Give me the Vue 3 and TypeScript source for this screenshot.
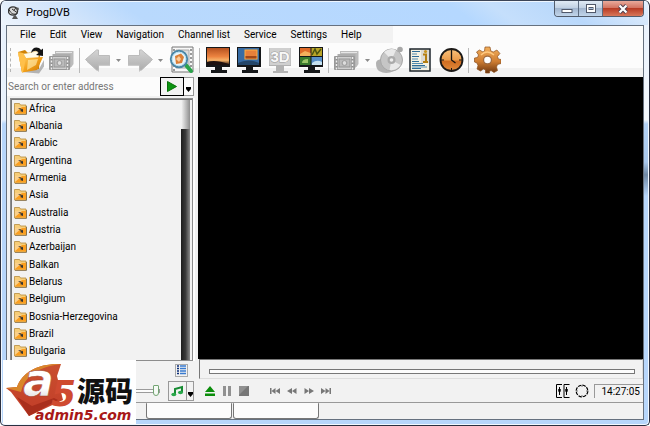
<script setup lang="ts">
import { ref } from 'vue'

interface Tool {
  kind: 'button' | 'sep' | 'caret'
  icon?: string
  label?: string
}

const menus: string[] = ['File', 'Edit', 'View', 'Navigation', 'Channel list', 'Service', 'Settings', 'Help']

const tools: Tool[] = [
  { kind: 'button', icon: 'open', label: 'Open' },
  { kind: 'button', icon: 'film', label: 'Recordings' },
  { kind: 'sep' },
  { kind: 'button', icon: 'back', label: 'Back' },
  { kind: 'caret', label: 'Back history' },
  { kind: 'button', icon: 'forward', label: 'Forward' },
  { kind: 'caret', label: 'Forward history' },
  { kind: 'button', icon: 'search', label: 'Search' },
  { kind: 'sep' },
  { kind: 'button', icon: 'screen', label: 'Full screen' },
  { kind: 'button', icon: 'pip', label: 'Picture in picture' },
  { kind: 'button', icon: 'stereo', label: 'Stereo mode' },
  { kind: 'button', icon: 'mosaic', label: 'Mosaic' },
  { kind: 'sep' },
  { kind: 'button', icon: 'film', label: 'Record' },
  { kind: 'caret', label: 'Record options' },
  { kind: 'button', icon: 'disc', label: 'Disc' },
  { kind: 'button', icon: 'guide', label: 'Programme guide' },
  { kind: 'button', icon: 'clock', label: 'Scheduler' },
  { kind: 'sep' },
  { kind: 'button', icon: 'gear', label: 'Options' },
]

const channels: string[] = [
  'Africa', 'Albania', 'Arabic', 'Argentina', 'Armenia', 'Asia', 'Australia', 'Austria',
  'Azerbaijan', 'Balkan', 'Belarus', 'Belgium', 'Bosnia-Herzegovina', 'Brazil', 'Bulgaria',
]

const address = ref('')
const position = ref(0)
const volume = ref(100)
</script>

<template>
  <div class="window">
    <svg class="defs" width="0" height="0" aria-hidden="true">
      <defs>
        <linearGradient id="gold" x1="0" y1="0" x2="1" y2="1">
          <stop offset="0" stop-color="#ffe08a" /><stop offset=".55" stop-color="#f5a31c" /><stop offset="1" stop-color="#c87400" />
        </linearGradient>
        <linearGradient id="sunset" x1="0" y1="0" x2="0" y2="1">
          <stop offset="0" stop-color="#b5511f" /><stop offset=".5" stop-color="#ec8340" /><stop offset=".72" stop-color="#f6b36a" /><stop offset="1" stop-color="#2a1208" />
        </linearGradient>
        <linearGradient id="silver" x1="0" y1="0" x2="0" y2="1">
          <stop offset="0" stop-color="#d4d4d4" /><stop offset="1" stop-color="#adadad" />
        </linearGradient>
        <linearGradient id="bronze" x1="0" y1="0" x2="0" y2="1">
          <stop offset="0" stop-color="#f3b05c" /><stop offset=".55" stop-color="#cf7e33" /><stop offset="1" stop-color="#6e3710" />
        </linearGradient>
        <linearGradient id="dial" x1="0" y1="0" x2="0" y2="1">
          <stop offset="0" stop-color="#f9c27c" /><stop offset=".5" stop-color="#ec9d4c" /><stop offset=".55" stop-color="#cf6d22" /><stop offset="1" stop-color="#e28b3c" />
        </linearGradient>
        <linearGradient id="flame" x1="0" y1="0" x2="0" y2="1">
          <stop offset="0" stop-color="#c9502f" /><stop offset="1" stop-color="#c23c28" />
        </linearGradient>
        <linearGradient id="pearl" x1="0" y1="0" x2="0" y2="1">
          <stop offset=".65" stop-color="#fff" /><stop offset="1" stop-color="#c4c4c4" />
        </linearGradient>
      </defs>
    </svg>

    <header class="titlebar">
      <svg class="app-icon" viewBox="0 0 12 14">
        <ellipse cx="5" cy="5" rx="4.6" ry="4.2" fill="#d8d8d8" stroke="#333" stroke-width="1.3" />
        <path d="M1 3.5C3 8 6 9 9.500 7.500M4 3l5 3.500M8 1.500l-2 3" fill="none" stroke="#333" />
        <path d="M6 9.500L4 13h6L7.500 9z" fill="#555" /><circle cx="9.500" cy="3" r="1.400" fill="#555" />
      </svg>
      <h1>ProgDVB</h1>
      <div class="caption">
        <button aria-label="Minimize"><svg viewBox="0 0 12 12"><rect x="1" y="6.500" width="10" height="3" fill="#fff" stroke="#50586a" /></svg></button>
        <button aria-label="Maximize"><svg viewBox="0 0 12 12"><rect x="1.500" y="1.500" width="9" height="8" fill="#fff" stroke="#50586a" /><rect x="4" y="4.500" width="4" height="2" fill="#a9c0dc" stroke="#50586a" /></svg></button>
        <button class="close" aria-label="Close"><svg viewBox="0 0 12 12"><path d="M2.500 2.500l7 7M9.500 2.500l-7 7" stroke="#4d4050" stroke-width="4" /><path d="M2.500 2.500l7 7M9.500 2.500l-7 7" stroke="#fff" stroke-width="2.200" /></svg></button>
      </div>
    </header>

    <div class="client">
      <nav class="menubar">
        <div class="menus">
          <button v-for="m in menus" :key="m">{{ m }}</button>
        </div>
      </nav>

      <div class="toolbar" role="toolbar" aria-label="Main toolbar">
        <span class="grip"></span>
        <template v-for="(t, i) in tools" :key="i">
          <span v-if="t.kind === 'sep'" class="sep"></span>
          <button v-else-if="t.kind === 'caret'" class="caret" :aria-label="t.label">
            <svg viewBox="0 0 5 3"><path d="M0 0h5L2.500 3z" fill="#8a8a8a" /></svg>
          </button>
          <button v-else class="tool" :aria-label="t.label">
            <svg v-if="t.icon === 'open'" viewBox="0 0 28 28">
              <path d="M5 26l17 1.500 5-7V14l-5 9z" fill="#888" opacity=".6" />
              <path d="M1 6l7-2 3 3 12 2-1 14L5 26z" fill="#cf8205" />
              <path d="M6 8l14-3 2 4-2 14-13 1z" fill="#fffbea" stroke="#dcae55" stroke-width=".6" />
              <path d="M1 6.500l5 .5 3 5 17-1-6 13L5 26.500z" fill="url(#gold)" />
              <path d="M1 6.500l5 .5 3 5L6 26l-1 .5z" fill="#ffc04a" /><path d="M11 14l10-1-2 6-9 5z" fill="#fff3bd" opacity=".6" />
              <path d="M14 7c1-6 7-7 10-3l2-1.500V10l-7-1 2.500-2C20 4 17 4 14 7z" fill="#141414" />
            </svg>
            <svg v-else-if="t.icon === 'film'" viewBox="0 0 28 28">
              <path d="M7 5h18.500v13l-2 3H7z" fill="#bcbcbc" /><path d="M8 6.500h16M6 8.500h16" stroke="#e6e6e6" />
              <path d="M4.500 8h18v14h-18z" fill="#adadad" />
              <path d="M1.500 10.500h20v13h-20z" fill="#cfcfcf" stroke="#999" />
              <path d="M3.500 11v13M19.500 11v13" stroke="#909090" stroke-width="2.600" />
              <path d="M3.500 11v13M19.500 11v13" stroke="#eee" stroke-width="1.400" stroke-dasharray="2 1.500" />
              <rect x="6" y="13" width="11" height="8" fill="#bbb" stroke="#959595" /><circle cx="11.500" cy="17" r="2.400" fill="#ddd" stroke="#999" />
            </svg>
            <svg v-else-if="t.icon === 'back' || t.icon === 'forward'" :class="{ flip: t.icon === 'forward' }" viewBox="0 0 28 28">
              <path d="M3 16L14 7v4h12v9H15v6z" fill="#999" opacity=".5" />
              <path d="M1.500 13.500L12.500 4h2v5.500h11v9h-11V24h-2z" fill="url(#silver)" stroke="#bbb" />
            </svg>
            <svg v-else-if="t.icon === 'search'" viewBox="0 0 28 28">
              <path d="M4 1h21v25H4z" fill="#f8f8f8" stroke="#777" />
              <path d="M8 4h13v18H8z" fill="#ddd" stroke="#aaa" /><path d="M6 3v22M23 3v22" stroke="#999" stroke-width="2" stroke-dasharray="2 2" />
              <path d="M17 18l6 7" stroke="#2ba44b" stroke-width="4" stroke-linecap="round" />
              <circle cx="11" cy="13" r="8.200" fill="#e9f5fa" stroke="#4a86a6" stroke-width="2" />
              <circle cx="11" cy="13" r="6.800" fill="none" stroke="#b7e0f2" />
              <path d="M7 10l6-2.500 3 3.500-2 6-6 1z" fill="#dc7f36" /><path d="M8 13l3-3 2 3-2 3z" fill="#fbcb98" />
            </svg>
            <svg v-else-if="['screen', 'pip', 'stereo', 'mosaic'].includes(t.icon!)" viewBox="0 0 28 28">
              <path v-if="t.icon === 'stereo'" d="M3 2h22v18H3zM10 20h8v5h4v2H7v-2h3z" fill="#b2b2b2" />
              <path v-else d="M2 1h24v20H2zM11 21h7v3h5v3H7v-3h4z" fill="#151719" />
              <g v-if="t.icon === 'screen'">
                <rect x="3" y="2" width="22" height="17" fill="url(#sunset)" /><path d="M3 16q8-3 22 2v1H3z" fill="#1d1110" />
              </g>
              <g v-else-if="t.icon === 'pip'">
                <rect x="3" y="2" width="21" height="17" fill="#376ca5" /><path d="M3 17q10-5 21 0v2H3z" fill="#244669" />
                <rect x="10" y="4" width="12" height="9" fill="#e8803a" stroke="#ffad41" /><path d="M10.500 10h11v2.500h-11z" fill="#a14718" />
              </g>
              <g v-else-if="t.icon === 'stereo'">
                <rect x="3.500" y="2" width="21" height="17" fill="#d0d0d0" /><text x="14" y="16" class="stereo-text">3D</text>
              </g>
              <g v-else>
                <rect x="3" y="2" width="10.500" height="8" fill="#df6b29" /><path d="M3 8l5-3 5.500 2v3H3z" fill="#f5b05c" />
                <rect x="14.500" y="2" width="10.500" height="8" fill="#b9a428" /><path d="M15 9l3-6 2 5 4-5" fill="none" stroke="#4b5411" stroke-width="1.500" />
                <rect x="3" y="11" width="10.500" height="8" fill="#397a2d" /><path d="M5 17q0-4 6-4v4z" fill="#9bc568" />
                <rect x="14.500" y="11" width="10.500" height="8" fill="#588fc7" /><path d="M15 17q5-4 10-1v3H15z" fill="#c5e1f0" />
              </g>
            </svg>
            <svg v-else-if="t.icon === 'disc'" viewBox="0 0 28 28">
              <path d="M1 17q0-3 5-4l13 12q-8 4-15 0-3-2-3-8z" fill="#b2b2b2" />
              <circle cx="16.500" cy="14" r="11" fill="#c6c6c6" stroke="#a6a6a6" />
              <path d="M16.500 14L9 6q6-5 12-2zM16.500 14l9 5q-4 6-11 5z" fill="#e9e9e9" />
              <circle cx="16.500" cy="14" r="4" fill="#aaa" /><circle cx="16.500" cy="14" r="1.800" fill="#eee" />
              <circle cx="25" cy="3.500" r="2.800" fill="#a8a8a8" />
            </svg>
            <svg v-else-if="t.icon === 'guide'" viewBox="0 0 28 28">
              <rect x="4" y="3" width="20" height="22" fill="#f5f2e2" stroke="#1c252b" stroke-width="1.500" />
              <path d="M6 5.500h8M6 10.500h7M6 15.500h7M6 19.500h13M6 22.500h9" stroke="#2d6c98" stroke-width="1.200" /><path d="M6 8h5M6 13h6M6 17.500h11M6 21h15" stroke="#568eb0" />
              <rect x="15" y="4" width="8" height="13" fill="#dcdbd3" /><circle cx="19.500" cy="5.500" r="1.600" fill="#c9951c" /><path d="M17 8.500h3v7M17 16h5" fill="none" stroke="#b47f10" stroke-width="2" />
            </svg>
            <svg v-else-if="t.icon === 'clock'" viewBox="0 0 28 28">
              <circle cx="14.500" cy="14" r="11" fill="url(#dial)" stroke="#1c1a18" stroke-width="1.800" />
              <path d="M14.500 4v10l4 3" fill="none" stroke="#171411" stroke-width="1.300" /><path d="M14.500 22v2M4 14h3M22 14h3" stroke="#171411" />
            </svg>
            <svg v-else viewBox="0 0 28 28">
              <path d="M12 1h5l.8 4 2.500 1 3.600-2 3 3.500-2.400 3 .8 2.500 2.700.5v4l-3.500 1-1 2.500 1 3.500-3.500 2-3-2-1.500 1V27h-4v-3l-2-1-3 2-3.500-2 1-3.500-1-2.500-2.500-1v-4l3-.5 1-2.500-2-3L6.500 4 10 6l1.500-1z" fill="url(#bronze)" stroke="#8d501f" stroke-width=".7" />
              <path d="M8 9q6-6 13 0" fill="none" stroke="#ffc980" stroke-width="1.500" />
              <circle cx="14.500" cy="14" r="4.500" fill="#9b6941" /><circle cx="14.500" cy="14" r="3.300" fill="#fff" />
            </svg>
          </button>
        </template>
      </div>

      <main class="workspace">
        <aside class="sidebar">
          <form class="address" @submit.prevent>
            <input v-model="address" type="text" aria-label="Address" placeholder="Search or enter address" />
            <button class="go" aria-label="Go"><svg viewBox="0 0 10 11"><path d="M.5.500L9.500 5.500.5 10.500z" fill="#0b9410" stroke="#087008" /></svg></button>
            <button class="more" type="button" aria-label="Address history"><svg viewBox="0 0 5 5"><path d="M0 0h5v2L2.500 5 0 2z" /></svg></button>
          </form>
          <div class="tree">
            <ul>
              <li v-for="c in channels" :key="c">
                <svg viewBox="0 0 13 12">
                  <path d="M1 11.300h11.500V3" fill="none" stroke="#6b6558" />
                  <path d="M.5 2V.5h5l1 1.500h5.500v9H.5z" fill="#f6cd78" stroke="#b68b3c" stroke-width=".8" />
                  <path d="M1 4h11v6.500H1z" fill="#fb9f20" /><path d="M1 4h7L1 10z" fill="#fbd08a" />
                  <path d="M4 5.500q3-1 4 1l1-1V9L6 8l1.300-1Q6 6 4 5.500z" fill="#333" />
                </svg>
                <span>{{ c }}</span>
              </li>
            </ul>
            <div class="scroll"><span></span></div>
          </div>
          <div class="list-foot">
            <button aria-label="List view"><svg viewBox="0 0 9 10"><path d="M0 1h2M0 3.500h2M0 6h2M0 8.500h2" stroke="#0a2d78" stroke-width="1.500" /><path d="M3 1h6M3 3.500h6M3 6h6M3 8.500h6" stroke="#397bd0" stroke-width="1.500" /></svg></button>
          </div>
          <div class="volume">
            <input v-model="volume" type="range" min="0" max="100" aria-label="Volume" />
            <div class="audio">
              <button aria-label="Audio track"><svg viewBox="0 0 13 12"><path d="M4 9V4l7-2v5" fill="none" stroke="#168b32" stroke-width="2" /><ellipse cx="2.800" cy="9.500" rx="2.500" ry="1.800" fill="#29a84b" /><ellipse cx="9.500" cy="7.500" rx="2.500" ry="1.800" fill="#29a84b" /></svg></button>
              <button class="drop" aria-label="Audio options"><svg viewBox="0 0 5 5"><path d="M0 0h5v2L2.500 5 0 2z" /></svg></button>
            </div>
          </div>
        </aside>

        <section class="player">
          <div class="video"></div>
          <div class="seek"><input v-model="position" type="range" min="0" max="100" aria-label="Position" /></div>
          <div class="controls">
            <button aria-label="Eject"><svg viewBox="0 0 10 10"><path d="M0 6L5 0l5 6zM0 7.500h10V10H0z" fill="#0b8d0b" /></svg></button>
            <button aria-label="Pause"><svg viewBox="0 0 10 10"><path d="M1 0h3v10H1zM6 0h3v10H6z" fill="#919191" /></svg></button>
            <button aria-label="Stop"><svg viewBox="0 0 10 10"><path d="M0 0h10v10H0z" fill="#777" /><path d="M0 0h9L0 9z" fill="#919191" /></svg></button>
            <span class="spring"></span>
            <button aria-label="Previous"><svg viewBox="0 0 10 10"><path d="M0 2h1.500v6H0zM1.500 5l4-3v6zM5.500 5L10 2v6z" fill="#777" /></svg></button>
            <button aria-label="Rewind"><svg viewBox="0 0 10 10"><path d="M0 5l5-3v6zM5 5l4.500-3v6z" fill="#777" /></svg></button>
            <button aria-label="Fast forward"><svg viewBox="0 0 10 10"><path d="M10 5L5 2v6zM5 5L.5 2v6z" fill="#777" /></svg></button>
            <button aria-label="Next"><svg viewBox="0 0 10 10"><path d="M10 2H8.500v6H10zM8.500 5l-4-3v6zM4.500 5L0 2v6z" fill="#777" /></svg></button>
            <div class="right">
              <button aria-label="Equalizer"><svg class="eq" viewBox="0 0 14 14"><path d="M6 .5H.5v13H6M13.500.5H8v13h5.500M3.500 3v8M10.500 3v8M2 6h3M9 6h3" fill="none" stroke="#000" /><path d="M2.500 5h2v3h-2zM9.500 5h2v3h-2z" /></svg></button>
              <button aria-label="Signal"><svg class="eq" viewBox="0 0 14 14"><circle cx="7" cy="7" r="5.800" fill="none" stroke="#000" stroke-width="1.200" stroke-dasharray="3.500 1" /><path d="M7 1v2M7 11v2M1 7h2M11 7h2" stroke="#777" /></svg></button>
              <time>14:27:05</time>
            </div>
          </div>
        </section>
      </main>

      <footer class="status"><span></span><span></span></footer>
    </div>

    <div class="badge">
      <svg viewBox="0 0 133 64" role="img" aria-label="a5 源码 admin5.com">
        <path d="M3 28L14 27C19 12 36 3 58 4L54 16 60 40 26 56 8 32z" fill="url(#flame)" />
        <path d="M3 28L14 27C19 12 36 3 58 4q-26 3-36 18-3 5-4 10z" fill="#d9862a" />
        <path d="M14 37L26 56l29-16-4-2-22 8z" fill="#a92e1c" />
        <text x="48" y="46" class="five">5</text>
        <text x="20" y="36" class="letter">a</text>
        <text x="74" y="42" class="cjk">源码</text>
        <text x="32" y="60" class="domain">admin5.com</text>
      </svg>
    </div>
  </div>
</template>

<style>
body {
  background: #fff;
}
</style>

<style scoped>
.window {
  position: relative;
  box-sizing: border-box;
  height: 100vh;
  min-height: 300px;
  display: flex;
  flex-direction: column;
  padding: 0 5px 5px;
  border: 1px solid #2b3040;
  border-top-color: #3c4557;
  border-radius: 6px 6px 5px 5px;
  background:
    linear-gradient(180deg, #e8f1fc 0, #f4f8fd 28%, #b3d2f6 29%, #a9c8ec 38%, #6f88a4 41%, #b7d6fb 46%, #b7d6fb 100%) right / 6px 100% no-repeat,
    linear-gradient(180deg, #e8f1fc 0, #e8f1fc 28%, #b7d6fb 29%, #b7d6fb 100%);
  box-shadow: inset 0 0 0 1px #f2f8ff;
  font-family: Roboto, "Liberation Sans", sans-serif;
  font-size: 10px;
  color: #000;
  overflow: hidden;
}
.defs { position: absolute; }
button {
  margin: 0;
  padding: 0;
  border: 0;
  background: none;
  font: inherit;
  color: inherit;
  display: flex;
  align-items: center;
  justify-content: center;
}
svg { display: block; }

.titlebar {
  flex: 0 0 24px;
  display: flex;
  align-items: center;
  margin: 0 -4px;
  padding-left: 6px;
  background: linear-gradient(35deg, #eef5fd 0, #dbe9fb 8%, #b9d9fd 22%, #b5d8ff 70%, #c5dffc 76%, #b9d8fb 86%, #e4effc 100%);
  box-shadow: inset 0 1px 0 #eef6ff;
}
.app-icon { width: 12px; height: 14px; }
h1 {
  margin: 0 0 0 6px;
  flex: 1;
  font-size: 11px;
  font-weight: 400;
  line-height: 14px;
}
.caption {
  align-self: flex-start;
  display: flex;
  margin-right: 4px;
  border: 1px solid #525c6c;
  border-top: 0;
  border-radius: 0 0 4px 4px;
  overflow: hidden;
}
.caption button {
  width: 24px;
  height: 15px;
  border-right: 1px solid #5c6b80;
  background: linear-gradient(#e0eaf5 0, #c2d1e3 45%, #a3b6cf 50%, #c1d5ea 100%);
}
.caption .close {
  width: 40px;
  border-right: 0;
  background: linear-gradient(#e9aa9b 0, #d37462 45%, #b83c25 50%, #d8775a 100%);
}
.caption svg { width: 12px; height: 12px; }

.client {
  flex: 1;
  min-height: 0;
  display: flex;
  flex-direction: column;
  border: 1px solid #66717f;
  background: #f2f2f2;
}
.menubar {
  flex: 0 0 17px;
  background: #fcfcfc;
  display: flex;
}
.menus {
  display: flex;
  gap: 14px;
  padding: 0 31px 0 13px;
  background: #f2f2f2;
}
.toolbar {
  flex: 0 0 34px;
  display: flex;
  align-items: center;
  background: linear-gradient(#fcfcfc 0, #fcfcfc 25px, #f2f2f2 25px);
}
.grip {
  width: 4px;
  height: 24px;
  border-left: 1px dashed #b5b5b5;
  margin-left: 3px;
}
.tool { width: 31px; height: 30px; }
.tool svg { width: 28px; height: 28px; }
.flip { transform: scaleX(-1); }
.caret { width: 11px; height: 28px; }
.caret svg { width: 5px; height: 3px; }
.sep {
  width: 1px;
  height: 25px;
  margin: 0 2px;
  background: #b9b9b9;
}
.stereo-text {
  font: bold 15px "Liberation Sans", sans-serif;
  fill: #f8f8f8;
  stroke: #999;
  stroke-width: 1px;
  paint-order: stroke;
  text-anchor: middle;
}

.workspace {
  flex: 1;
  min-height: 0;
  display: flex;
}
.sidebar {
  flex: 0 0 187px;
  display: flex;
  flex-direction: column;
  margin-right: 4px;
}
.address {
  flex: 0 0 19px;
  display: flex;
  background: #fcfcfc;
}
.address input {
  flex: 1;
  min-width: 0;
  border: 0;
  padding: 0 0 0 1px;
  background: #fcfcfc;
  font: inherit;
  outline: 0;
}
.address input::placeholder { color: #777; }
.go {
  width: 24px;
  border: 1px solid #000;
  background: #f2f2f2;
}
.go svg { width: 10px; height: 11px; }
.more {
  width: 10px;
  border: 1px solid #999;
  border-left: 0;
  align-items: flex-end;
  padding-bottom: 3px;
}
.more svg, .drop svg { width: 5px; height: 5px; }
.tree {
  flex: 1;
  min-height: 0;
  display: flex;
  margin: 2px 1px 0 3px;
  border: 1px solid #8d8d8d;
  box-shadow: inset 1px 1px 0 #777, 2px 0 0 #fff;
}
ul {
  flex: 1;
  margin: 0;
  padding: 1px 0 0 3px;
  list-style: none;
  display: grid;
  grid-auto-rows: 1fr;
}
li {
  display: flex;
  align-items: center;
  gap: 2px;
  min-height: 0;
  white-space: nowrap;
  line-height: 12px;
}
li svg { width: 13px; height: 12px; }
.scroll {
  width: 9px;
  margin: 1px 2px 0 0;
  background: linear-gradient(90deg, #1c1c1c, #3a3a3a 50%, #8a8a8a);
}
.scroll span {
  display: block;
  height: 29px;
  background: linear-gradient(90deg, #f6f6f6, #8e8e8e);
}
.list-foot {
  flex: 0 0 18px;
  display: flex;
  justify-content: flex-end;
  align-items: center;
  padding-right: 6px;
}
.list-foot button {
  width: 13px;
  height: 13px;
  border: 1px solid #aaa;
}
.list-foot svg { width: 9px; height: 10px; }
.volume {
  flex: 0 0 23px;
  display: flex;
  justify-content: flex-end;
  align-items: center;
  gap: 8px;
}
.volume input, .seek input {
  appearance: none;
  margin: 0;
  background: none;
}
.volume input { width: 60px; height: 12px; }
.volume input::-webkit-slider-runnable-track {
  height: 4px;
  box-sizing: border-box;
  border: 1px solid #9b9b9b;
  background: #fcfcfc;
}
.volume input::-webkit-slider-thumb {
  appearance: none;
  width: 6px;
  height: 11px;
  margin-top: -5px;
  box-sizing: border-box;
  border: 1px solid #73a473;
  border-radius: 1px 1px 3px 3px;
  background: #f5faf5;
}
.audio {
  display: flex;
  width: 24px;
  height: 18px;
  border: 1px solid #999;
}
.audio button { flex: 1 0 16px; }
.audio svg { width: 13px; height: 12px; }
.audio .drop {
  flex: 0 0 7px;
  border-left: 1px solid #999;
  align-items: flex-end;
  padding-bottom: 3px;
}
.audio .drop svg { width: 5px; height: 5px; }

.player {
  flex: 1;
  min-width: 0;
  display: flex;
  flex-direction: column;
}
.video { flex: 1; background: #000; }
.seek {
  flex: 0 0 20px;
  box-sizing: border-box;
  display: flex;
  align-items: center;
  margin-left: 1px;
  padding: 4px 7px 0 9px;
  border: 1px solid #ddd;
  border-top-color: #777;
  border-left-color: #777;
}
.seek input { width: 100%; height: 5px; }
.seek input::-webkit-slider-runnable-track {
  height: 5px;
  box-sizing: border-box;
  border: 1px solid #777;
  background: #fcfcfc;
}
.seek input::-webkit-slider-thumb {
  appearance: none;
  width: 1px;
  height: 3px;
}
.controls {
  flex: 0 0 23px;
  display: flex;
  align-items: center;
  gap: 6px;
  padding-left: 6px;
}
.controls > button { width: 11px; height: 20px; }
.controls > button svg { width: 10px; height: 10px; }
.spring { width: 8px; }
.right {
  flex: 1;
  display: flex;
  justify-content: flex-end;
  align-items: center;
  gap: 5px;
}
.eq { width: 14px; height: 14px; }
time {
  box-sizing: border-box;
  width: 49px;
  padding-right: 3px;
  line-height: 13px;
  text-align: right;
  border-top: 1px solid #999;
  border-left: 1px solid #999;
}

.status {
  flex: 0 0 16px;
  display: flex;
  gap: 1px;
  padding-left: 139px;
  border-top: 1px solid #999;
}
.status span {
  width: 84px;
  border: 1px solid #777;
  border-top: 0;
  border-radius: 1px 1px 3px 3px;
  background: #fcfcfc;
}

.badge {
  position: absolute;
  left: 2px;
  bottom: 1px;
  width: 133px;
  height: 64px;
  background: #fff;
}
.badge svg {
  width: 133px;
  height: 64px;
  overflow: visible;
}
.letter {
  font: italic bold 46px "DejaVu Sans", sans-serif;
  fill: url(#pearl);
  stroke: #9e3d2c;
  stroke-width: .5px;
}
.five { font: italic bold 36px "DejaVu Sans", sans-serif; fill: #cf4a30; }
.cjk { font: 900 28px "Noto Sans CJK SC", sans-serif; fill: #111; }
.domain { font: italic bold 14px "DejaVu Sans", sans-serif; fill: #a81818; }
</style>
